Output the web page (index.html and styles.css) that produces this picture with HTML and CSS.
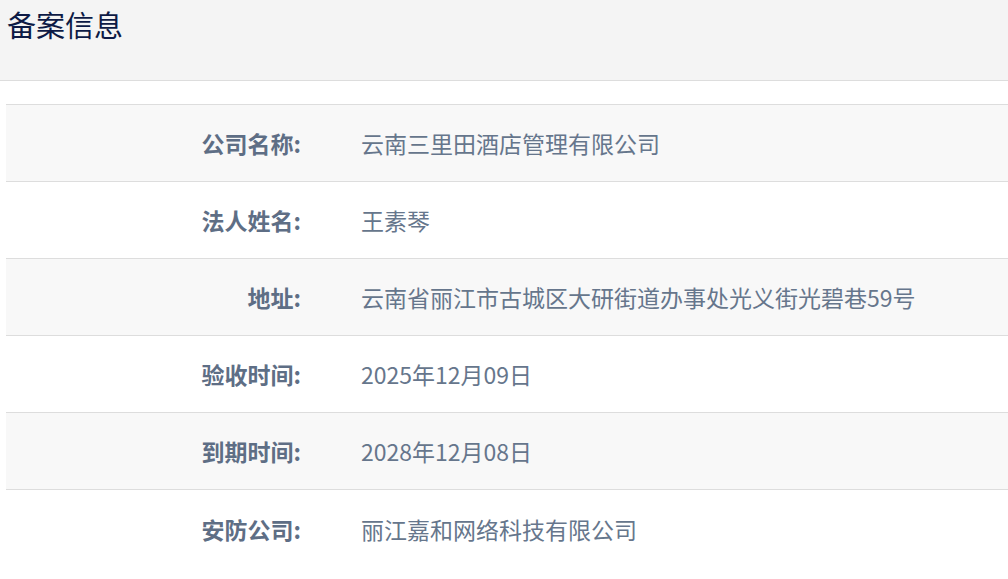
FILE: index.html
```html
<!DOCTYPE html>
<html lang="zh-CN">
<head>
<meta charset="utf-8">
<title>备案信息</title>
<link rel="stylesheet" href="styles.css">
</head>
<body>
<header class="page-header">
  <h1 class="page-title">备案信息</h1>
</header>
<main class="content">
  <div class="info-table">
    <div class="info-row alt">
      <div class="info-label">公司名称:</div>
      <div class="info-value">云南三里田酒店管理有限公司</div>
    </div>
    <div class="info-row">
      <div class="info-label">法人姓名:</div>
      <div class="info-value">王素琴</div>
    </div>
    <div class="info-row alt">
      <div class="info-label">地址:</div>
      <div class="info-value">云南省丽江市古城区大研街道办事处光义街光碧巷59号</div>
    </div>
    <div class="info-row">
      <div class="info-label">验收时间:</div>
      <div class="info-value">2025年12月09日</div>
    </div>
    <div class="info-row alt">
      <div class="info-label">到期时间:</div>
      <div class="info-value">2028年12月08日</div>
    </div>
    <div class="info-row">
      <div class="info-label">安防公司:</div>
      <div class="info-value">丽江嘉和网络科技有限公司</div>
    </div>
  </div>
</main>
</body>
</html>
```

FILE: styles.css
```css
* { box-sizing: border-box; }
html, body {
  margin: 0;
  padding: 0;
  background: #ffffff;
  font-family: "Noto Sans CJK SC", "Noto Sans", sans-serif;
  overflow: hidden;
}
.page-header {
  height: 81px;
  background: #f4f4f4;
  border-bottom: 1px solid #dddddd;
  padding: 4px 0 0 7px;
}
.page-title {
  margin: 0;
  font-size: 29px;
  line-height: 40px;
  font-weight: 400;
  color: #0d1a45;
}
.content {
  padding: 23px 0 0 6px;
}
.info-table {
  border-top: 1px solid #dddddd;
}
.info-row {
  display: flex;
  align-items: center;
  height: 77px;
  border-bottom: 1px solid #dddddd;
  background: #ffffff;
}
.info-row:last-child { border-bottom: none; }
.info-row.alt { background: #f8f8f8; }
.info-label {
  width: 299px;
  flex: none;
  text-align: right;
  font-size: 23px;
  font-weight: 700;
  color: #5e6e85;
  padding-right: 4px;
}
.info-value {
  padding-left: 56px;
  font-size: 23px;
  color: #66768c;
  white-space: nowrap;
}
```
